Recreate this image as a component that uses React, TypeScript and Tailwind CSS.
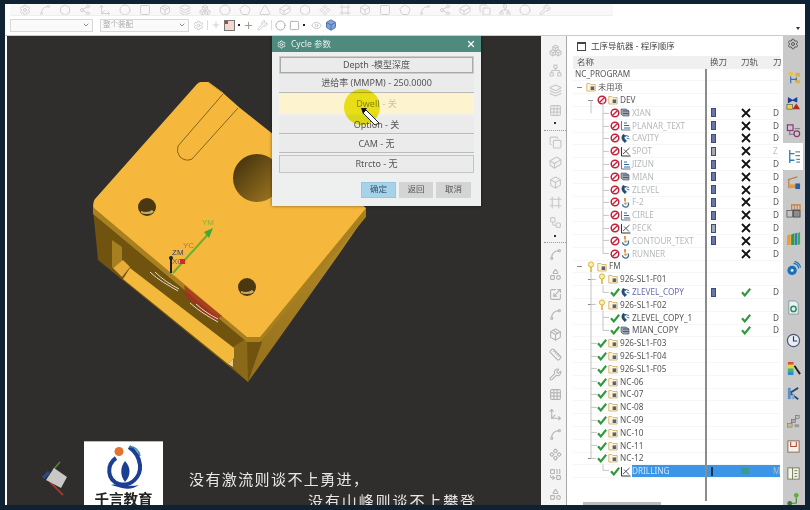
import React from "react";
import {
  Settings, Boxes, Network, Layers, Grid3x3, Box, Cuboid, Copy, Workflow, Spline, Share2, Move3d, Scaling,
  Ruler, Circle, Square, Hexagon, Pentagon, Triangle, Shapes, Component, Package, Combine, Frame, Wrench, ChevronDown,
  X, Eye, Plus,
} from "lucide-react";

const font = "font-['Noto_Sans','Noto_Sans_CJK_SC',sans-serif]";

const NoEntry = () => (
  <svg viewBox="0 0 10 10" className="h-[10px] w-[10px]">
    <circle cx="5" cy="5" r="3.8" fill="#fff" stroke="#c5203a" strokeWidth="1.5" />
    <path d="M2.4 7.6 7.6 2.4" stroke="#c5203a" strokeWidth="1.4" />
  </svg>
);

const Check = () => (
  <svg viewBox="0 0 10 10" className="h-[10px] w-[10px]">
    <path d="M1 5.2 3.8 8.4 9.2 1.8" fill="none" stroke="#2f9a3c" strokeWidth="2.2" />
  </svg>
);

const Bulb = () => (
  <svg viewBox="0 0 10 12" className="h-[12px] w-[10px]">
    <circle cx="5" cy="3.5" r="2.6" fill="#fbeeb0" stroke="#d9b433" strokeWidth="1" />
    <path d="M5 6v5" stroke="#d9b433" strokeWidth="1.6" />
  </svg>
);

const Folder = () => (
  <svg viewBox="0 0 10 10" className="h-[10px] w-[10px]">
    <path d="M.8 1.5h3l1 1h4.4v6.5H.8z" fill="#fdf4dc" stroke="#d0a860" strokeWidth=".8" />
    <rect x="4.6" y="4.4" width="3.6" height="3.6" fill="#5a6470" />
  </svg>
);

const Minus = () => <span className="h-px w-[5px] bg-[#888]" />;

type Op = "mill" | "planar" | "zlevel" | "drill" | "flow";

const OpIcon = ({ kind }: { kind: Op }) => (
  <svg viewBox="0 0 11 11" className="h-[11px] w-[11px]">
    {kind === "mill" && (
      <>
        <path d="M1 2h5l3 2v5H3L1 7z" fill="#9aa2ad" stroke="#555d69" strokeWidth=".7" />
        <path d="M3 4h6M3 6.500h6" stroke="#3f5f86" strokeWidth="1" />
      </>
    )}
    {kind === "planar" && (
      <>
        <path d="M1.500 1v9h9" fill="none" stroke="#6b7480" strokeWidth="1" />
        <path d="M4 3h3M4 5.500h5M4 8h6" stroke="#2c6aa0" strokeWidth="1" />
      </>
    )}
    {kind === "zlevel" && (
      <path d="M3 1.500c-2 3-1 6 2 8l1.500-1.800-2-1.700c-.5-1-.5-1.500 0-2.500l1.500-.5z M6 2.500l3 1M6.500 5l3 1" fill="#1f4d6e" stroke="#1f4d6e" strokeWidth=".8" />
    )}
    {kind === "drill" && (
      <>
        <path d="M1.500 1v9h9" fill="none" stroke="#333" strokeWidth="1" />
        <path d="M3 8 9.500 2M4 3.500l5 5" stroke="#4a5563" strokeWidth="1" />
      </>
    )}
    {kind === "flow" && (
      <>
        <path d="M5 1v3.500" stroke="#c8752c" strokeWidth="1.500" />
        <path d="M8 5.500a3 3 0 1 1-5.500 1.700" fill="none" stroke="#3f6f9e" strokeWidth="1.300" />
        <circle cx="5.500" cy="6.500" r="1.300" fill="#d99a4a" />
      </>
    )}
  </svg>
);

const ToolBar = ({ hatched }: { hatched?: boolean }) => (
  <span className={`block h-[9px] w-[5px] border border-[#3e4a7a] ${hatched ? "bg-[#a4a8b4]" : "bg-[#6a76a8]"}`} />
);

const Cross = () => (
  <svg viewBox="0 0 10 10" className="h-[10px] w-[10px]">
    <path d="M1 1l8 8M9 1 1 9" stroke="#111" strokeWidth="1.800" />
  </svg>
);

const ops: [string, Op, boolean?][] = [
  ["XIAN", "mill"],
  ["PLANAR_TEXT", "planar"],
  ["CAVITY", "zlevel"],
  ["SPOT", "drill", true],
  ["JIZUN", "planar"],
  ["MIAN", "mill"],
  ["ZLEVEL", "zlevel"],
  ["F-2", "flow"],
  ["CIRLE", "planar"],
  ["PECK", "drill", true],
  ["CONTOUR_TEXT", "flow"],
  ["RUNNER", "flow"],
];

const Slot = ({ children }: { children?: React.ReactNode }) => (
  <span className="flex h-full w-[11px] shrink-0 items-center justify-center">{children}</span>
);

const Row = ({
  name,
  pad = "",
  textClass = "text-[#555]",
  tool,
  path,
  last,
  selected,
}: {
  name: React.ReactNode;
  pad?: string;
  textClass?: string;
  tool?: React.ReactNode;
  path?: React.ReactNode;
  last?: string;
  selected?: boolean;
}) => (
  <div className="grid h-[12.800px] grid-cols-[133px_31px_31px_12px] border-b border-[#f6f6f6] text-[8.200px] leading-none">
    <div className={`flex h-full items-center whitespace-nowrap ${pad} ${textClass}`}>{name}</div>
    <div className={`flex items-center pl-[5px] ${selected ? "bg-[#3b96e8]" : ""}`}>{tool}</div>
    <div className={`flex items-center pl-[4px] ${selected ? "bg-[#3b96e8]" : ""}`}>{path}</div>
    <div className={`flex items-center pl-[5px] ${selected ? "bg-[#3b96e8]" : ""} ${last === "D" ? "text-[#555]" : "text-[#bbb]"}`}>{last}</div>
  </div>
);

const FolderRow = ({ label, pad, lead, status }: { label: string; pad: string; lead?: boolean; status: React.ReactNode }) => (
  <Row
    pad={pad}
    name={
      <>
        <Slot>{lead && <Minus />}</Slot>
        {status && <Slot>{status}</Slot>}
        <Slot>
          <Folder />
        </Slot>
        <span className="ml-[2px]">{label}</span>
      </>
    }
  />
);

const OpRow = ({ label, kind, status, textClass, tool, path, last, selected }: {
  label: string;
  kind: Op;
  status: React.ReactNode;
  textClass: string;
  tool?: React.ReactNode;
  path: React.ReactNode;
  last: string;
  selected?: boolean;
}) => (
  <Row
    pad="pl-[36px]"
    textClass={textClass}
    tool={tool}
    path={path}
    last={last}
    selected={selected}
    name={
      <>
        <Slot>{status}</Slot>
        <Slot>
          <OpIcon kind={kind} />
        </Slot>
        <span className={`ml-px flex h-full flex-1 items-center ${selected ? "bg-[#3b96e8]" : ""}`}>{label}</span>
      </>
    }
  />
);

const TreeLines = () => (
  <svg viewBox="573 68.600 133 436" className="absolute top-0 left-0 h-[436px] w-[133px]" fill="none" stroke="#c4c4c4" strokeWidth="1">
    <path d="M591 100V113" />
    <path d="M603 100V253M603 113h6M603 126h6M603 138h6M603 151h6M603 164h6M603 177h6M603 190h6M603 202h6M603 215h6M603 228h6M603 240h6M603 253h6" />
    <path d="M591 272V458M591 279h5M591 304h5M591 343h6M591 356h6M591 368h6M591 381h6M591 394h6M591 407h6M591 420h6M591 432h6M591 445h6M591 458h5" />
    <path d="M603 285V292h6M603 310V330h6M603 317h6M603 464V470h6" />
  </svg>
);

const Navigator = () => (
  <div className={`flex w-[216px] flex-col bg-white pr-[3px] pl-[6px] ${font}`}>
    <div className="flex h-[20px] shrink-0 items-center gap-[5px] pl-[4px] text-[8.500px] text-[#444]">
      <span className="h-[9px] w-[9px] border border-t-2 border-[#444]" />
      工序导航器 - 程序顺序
    </div>
    <div className="grid h-[12.600px] shrink-0 grid-cols-[133px_31px_31px_12px] items-center bg-[#f0f0f0] text-[8.500px] text-[#555]">
      <span className="pl-[4px]">名称</span>
      <span className="pl-[4px]">换刀</span>
      <span className="pl-[4px]">刀轨</span>
      <span className="pl-[5px]">刀</span>
    </div>
    <div className="relative flex-1 overflow-hidden">
      <Row pad="pl-[2px]" name="NC_PROGRAM" />
      <Row
        pad="pl-[1px]"
        name={
          <>
            <Slot>
              <Minus />
            </Slot>
            <Slot>
              <Folder />
            </Slot>
            <span className="ml-[2px]">未用项</span>
          </>
        }
      />
      <FolderRow label="DEV" pad="pl-[12px]" lead status={<NoEntry />} />
      {ops.map(([label, kind, hatched], i) => (
        <OpRow
          key={label}
          label={label}
          kind={kind}
          status={<NoEntry />}
          textClass="text-[#b5b8bb]"
          tool={i < 11 ? <ToolBar hatched={hatched} /> : undefined}
          path={<Cross />}
          last={label === "SPOT" ? "Z" : "D"}
        />
      ))}
      <FolderRow label="FM" pad="pl-[1px]" lead status={<Bulb />} />
      <FolderRow label="926-SL1-F01" pad="pl-[12px]" lead status={<Bulb />} />
      <OpRow label="ZLEVEL_COPY" kind="zlevel" status={<Check />} textClass="text-[#6a6aa8]" tool={<ToolBar />} path={<Check />} last="D" />
      <FolderRow label="926-SL1-F02" pad="pl-[12px]" lead status={<Bulb />} />
      <OpRow label="ZLEVEL_COPY_1" kind="zlevel" status={<Check />} textClass="text-[#555]" path={<Check />} last="D" />
      <OpRow label="MIAN_COPY" kind="mill" status={<Check />} textClass="text-[#555]" path={<Check />} last="D" />
      {["926-SL1-F03", "926-SL1-F04", "926-SL1-F05", "NC-06", "NC-07", "NC-08", "NC-09", "NC-10", "NC-11"].map((n) => (
        <FolderRow key={n} label={n} pad="pl-[12px]" status={<Check />} />
      ))}
      <FolderRow label="NC-12" pad="pl-[12px]" lead status={<Check />} />
      <OpRow
        label="DRILLING"
        kind="drill"
        status={<Check />}
        textClass="text-[#cfe6fb]"
        tool={<span className="h-[9px] w-[2px] bg-[#234]" />}
        path={<span className="h-[6px] w-[8px] bg-[#3a9a90]" />}
        last="M"
        selected
      />
      <TreeLines />
      <span className="absolute top-0 bottom-[4px] left-[132px] w-[2px] bg-[#8c8c8c]" />
      <span className="absolute bottom-0 left-[10px] h-[3px] w-[78px] bg-[#bdbdbd]" />
    </div>
  </div>
);

// side tab icons, small hand drawn glyphs
const tabIcons: React.ReactNode[] = [
  <>
    <circle cx="5" cy="4" r="2.500" fill="#e8c33c" />
    <path d="M5 7v7M5 10h6M11 8v4" stroke="#3f6fa8" strokeWidth="1.300" />
    <rect x="10" y="3" width="5" height="4" fill="#e0b040" />
    <rect x="10" y="11" width="5" height="3" fill="#e0b040" />
  </>,
  <>
    <path d="M2 1l5 3 5-3v6L7 5 2 8z" fill="#1c3fa0" />
    <rect x="1" y="9" width="6" height="5" fill="#efd23c" stroke="#444" strokeWidth=".6" />
    <path d="M7 14l4-6 4 6z" fill="#b02a22" />
  </>,
  <>
    <rect x="1.500" y="2" width="6" height="6" fill="none" stroke="#8a3a7a" strokeWidth="1.300" />
    <path d="M4 8v5M4 12h5" stroke="#7c6a8c" strokeWidth="1" />
    <circle cx="11.500" cy="11.500" r="3" fill="none" stroke="#8a3a6a" strokeWidth="1.300" />
    <path d="M9 6h6" stroke="#777" strokeWidth="1" />
  </>,
  <>
    <path d="M4 1v14M4 5h5M4 12h5" stroke="#2f7cb4" strokeWidth="1.400" />
    <path d="M10 3h5M10 7h5M11 11h4M11 14h4" stroke="#6a8a9a" strokeWidth="1.200" />
  </>,
  <>
    <path d="M2 5 12 2M3 4v10" stroke="#b87a4a" strokeWidth="1.200" />
    <path d="M3 10h8v4H3z" fill="#e89a38" />
    <path d="M10 9h5v6h-5z" fill="#2a5fa8" />
  </>,
  <>
    <path d="M6 2h9v5H6z" fill="none" stroke="#d07a30" strokeWidth="1.200" />
    <path d="M9 2v5M12 2v5" stroke="#d07a30" strokeWidth="1" />
    <rect x="1" y="8" width="6" height="7" fill="#c4c4c4" stroke="#555" strokeWidth=".8" />
    <rect x="8" y="8" width="7" height="7" fill="#8c8c8c" stroke="#444" strokeWidth=".8" />
  </>,
  <>
    <path d="M1 5 5 3v12H1z" fill="#e8a030" />
    <path d="M5.500 4 9 2v13H5.500z" fill="#2e9a4a" />
    <path d="M9.500 3 12 1.500V15H9.500z" fill="#2f7cc4" />
    <path d="M12.500 2.500 15 1v13l-2.500 1z" fill="#45a850" />
  </>,
  <>
    <circle cx="6.500" cy="10" r="5" fill="#1c70b8" />
    <circle cx="6.500" cy="10" r="1.500" fill="#dff" />
    <path d="M8 2.500a6 6 0 0 1 5.500 5.500M9 .5A8.500 8.500 0 0 1 15.500 7" fill="none" stroke="#1c70b8" strokeWidth="1.300" />
  </>,
  <>
    <path d="M3 1h7l3 3v11H3z" fill="#e8f2f2" stroke="#7a8a9a" strokeWidth=".8" />
    <circle cx="8" cy="9.500" r="2.800" fill="none" stroke="#2f8a60" strokeWidth="1.600" />
  </>,
  <>
    <circle cx="8" cy="8" r="6.500" fill="#e8ecf4" stroke="#4a5a78" strokeWidth="1.300" />
    <path d="M8 3.500V8.500H12" fill="none" stroke="#263854" strokeWidth="1.200" />
  </>,
  <>
    <path d="M2 1h6v3H2z" fill="#d85030" />
    <path d="M2 4h6v4H2z" fill="#e8d438" />
    <path d="M2 8h6v3H2z" fill="#38b860" />
    <path d="M2 11h6v4H2z" fill="#2f8ad0" />
    <path d="M9 5l6 9" stroke="#222" strokeWidth="2" />
  </>,
  <>
    <path d="M2 2h3v12H2z" fill="#5a90c8" />
    <path d="M5 7 13 2M5 8l8 6" stroke="#2a4a70" strokeWidth="2" />
    <path d="M6 9h3v5H6z" fill="#88a8cc" />
  </>,
  <>
    <path d="M4 11 8 7l4-4" stroke="#777" strokeWidth="1" />
    <rect x="1.500" y="10" width="5" height="4" fill="#cdb68a" stroke="#777" strokeWidth=".6" />
    <rect x="6" y="6" width="4" height="3" fill="#aaa" stroke="#666" strokeWidth=".6" />
    <rect x="10" y="1.500" width="4" height="3" fill="#c0c0c0" stroke="#666" strokeWidth=".6" />
    <rect x="9" y="11" width="5" height="3" fill="#999" />
  </>,
  <>
    <rect x="2" y="2" width="12" height="12" fill="#f6efe8" stroke="#8a6a5a" strokeWidth="1" />
    <path d="M5 3v5h6V3" fill="none" stroke="#b0503a" strokeWidth="1.200" />
  </>,
  <>
    <rect x="2" y="2" width="12" height="12" fill="#f4f4ea" stroke="#7a7a60" strokeWidth="1" />
    <path d="M7 2v12M9 5h3M9 8h3M9 11h3" stroke="#6a7a50" strokeWidth="1" />
  </>,
  <>
    <circle cx="11" cy="3.500" r="2.500" fill="#5ab040" />
    <path d="M11 6v6M4 12h7" stroke="#4a8a30" strokeWidth="1.300" />
    <circle cx="4" cy="12" r="2.500" fill="#3a7a40" />
  </>,
];

const TabIcon = ({ index, className = "" }: { index: number; className?: string }) => (
  <svg viewBox="0 0 16 16" className={`h-[15px] w-[15px] shrink-0 ${className}`}>
    {tabIcons[index]}
  </svg>
);

const Rail = () => (
  <div className="flex w-[22px] flex-col items-center overflow-hidden bg-[#c9c9c9] pt-[2px] pr-[2px]">
    <Settings className="mb-[19.500px] h-[12px] w-[12px] shrink-0 text-[#555]" />
    <TabIcon index={0} />
    <TabIcon index={1} className="mt-[11.500px]" />
    <TabIcon index={2} className="mt-[11.500px]" />
    <div className="mt-[5.500px] flex h-[27px] w-full shrink-0 items-center justify-center bg-white">
      <TabIcon index={3} />
    </div>
    <TabIcon index={4} className="mt-[4.500px]" />
    <TabIcon index={5} className="mt-[13px]" />
    <TabIcon index={6} className="mt-[13px]" />
    <TabIcon index={7} className="mt-[15px]" />
    <TabIcon index={8} className="mt-[24px]" />
    <TabIcon index={9} className="mt-[18px]" />
    <TabIcon index={10} className="mt-[13px]" />
    <TabIcon index={11} className="mt-[10px]" />
    <TabIcon index={12} className="mt-[13px]" />
    <TabIcon index={13} className="mt-[10px]" />
    <TabIcon index={14} className="mt-[12px]" />
    <TabIcon index={15} className="mt-[11px]" />
  </div>
);

const toolIcon = "h-[13px] w-[13px] shrink-0 text-[#c6c6c6]";
const toolGroup = "flex flex-col gap-[7px]";
const groupA = [Boxes, Network, Layers, Grid3x3];
const groupB = [Copy, Cuboid, Box, Frame, Workflow];
const groupC = [Spline, Shapes, Scaling, Spline, Package, Ruler, Wrench, Grid3x3, Move3d, Spline, Component, Combine, Shapes];

const LeftTools = () => (
  <div className="flex w-[23px] flex-col items-center overflow-hidden border-r border-[#a8a8a8] bg-[#f4f4f4] pt-[7.500px]">
    <div className={toolGroup}>
      {groupA.map((Icon, i) => (
        <Icon key={i} className={toolIcon} />
      ))}
    </div>
    <span className="my-[5.500px] h-[2px] w-[2px] shrink-0 bg-[#333]" />
    <span className="mb-[5.500px] w-full shrink-0 border-t border-dotted border-[#999]" />
    <div className={toolGroup}>
      {groupB.map((Icon, i) => (
        <Icon key={i} className={toolIcon} />
      ))}
    </div>
    <span className="my-[5.500px] h-[2px] w-[2px] shrink-0 bg-[#333]" />
    <span className="mb-[4.500px] w-full shrink-0 border-t border-dotted border-[#999]" />
    <div className={toolGroup}>
      {groupC.map((Icon, i) => (
        <Icon key={i} className="h-[13px] w-[13px] shrink-0 text-[#b4b4b4]" />
      ))}
    </div>
  </div>
);

const topIcons = [Settings, Spline, Hexagon, Share2, Move3d, Circle, Square, Package, Layers, Boxes, Circle, Pentagon, Triangle, Cuboid, Hexagon, Component, Frame, Box, Square, Pentagon, Spline, Share2, Cuboid, Copy, Network, Circle, Wrench];

const Combo = ({ width, label }: { width: string; label?: string }) => (
  <div className={`flex h-[13px] items-center justify-between border border-[#d8d8d8] bg-[#fafafa] px-[2px] text-[7.500px] text-[#aaa] ${width}`}>
    <span>{label}</span>
    <ChevronDown className="h-[8px] w-[8px] text-[#555]" />
  </div>
);

const Toolbar = () => (
  <div className={`relative h-[32px] shrink-0 border-b border-[#dcc9ad] bg-white pl-[5px] ${font}`}>
    <div className="flex h-[12px] w-[603px] items-center gap-[8px] overflow-hidden border-b border-[#eee] bg-[#f8f8f8] pl-[9px]">
      {topIcons.map((Icon, i) => (
        <Icon key={i} className="h-[12px] w-[12px] shrink-0 text-[#d2d2d2]" />
      ))}
    </div>
    <div className="flex h-[18px] items-center">
      <Combo width="w-[83px]" />
      <span className="w-[7px]" />
      <Combo width="w-[89px]" label="整个装配" />
      <div className="ml-[4px] flex items-center gap-[3px]">
        <Settings className="h-[11px] w-[11px] text-[#c8c8c8]" />
        <span className="h-[10px] w-px bg-[#ddd]" />
        <Plus className="h-[10px] w-[10px] text-[#c8c8c8]" />
        <span className="h-[11px] w-[11px] border border-[#777] bg-[#f1d8cc]">
          <span className="block h-[3px] w-[3px] bg-[#c83c28]" />
        </span>
        <span className="h-[2px] w-[2px] bg-[#222]" />
        <Plus className="h-[11px] w-[11px] text-[#8da088]" />
        <Wrench className="h-[11px] w-[11px] text-[#c8c8c8]" />
        <span className="h-[10px] w-px bg-[#ddd]" />
        <Circle className="h-[11px] w-[11px] text-[#aaa]" />
        <Square className="h-[11px] w-[11px] text-[#aaa]" />
        <span className="h-[2px] w-[2px] bg-[#222]" />
        <Eye className="ml-[3px] h-[11px] w-[11px] text-[#c8c8c8]" />
        <Box className="h-[12px] w-[12px] fill-[#7fa4d8] text-[#4f74b0]" />
      </div>
    </div>
    <span className="absolute right-[5px] bottom-[5px] h-0 w-0 border-x-[2px] border-t-[3px] border-x-transparent border-t-[#333]" />
  </div>
);

const Part = () => (
  <svg viewBox="7 36 534 469" className="absolute inset-0 h-full w-full">
    <defs>
      <linearGradient id="hole" x1="0" x2="1" y1="0" y2="1">
        <stop offset="0" stopColor="#3b2c0c" />
        <stop offset="1" stopColor="#a67c22" />
      </linearGradient>
      <linearGradient id="side" x1="1" x2="0" y1="0" y2="1">
        <stop offset="0" stopColor="#b58c2a" />
        <stop offset="1" stopColor="#94701c" />
      </linearGradient>
    </defs>
    <path d="M260 338 366 215 337 257 248 382 246 345z" fill="url(#side)" />
    <path d="M93 209 98 260 248 382 262 342z" fill="#6f530f" />
    <path d="M233 347 247 338 248 382 233 368z" fill="#8a6918" />
    <path d="M112 240 122 247V262L112 268z" fill="#a68020" />
    <path d="M113 268 123 260 130 267 122 277z" fill="#e6ae38" />
    <path d="M130 268 234 348V358L228 364 123 279z" fill="#f2b93c" />
    <path d="M228 364 233 359V367z" fill="#e8cf8c" />
    <path d="M93 205V214L247 342H260L366 217V208z" fill="#a88020" />
    <path d="M208 82H201Q199 82 197 84L95 199Q92 203 94 208L247 337H260L366 208 240 108 223 93z" fill="#f5b83c" />
    <path d="M223 94 178 146Q176 152 180 157 186 162 192 159L238 108" fill="#f5b83c" stroke="#85641a" strokeWidth="1" />
    <path d="M208 82 223 93" stroke="#d09c30" strokeWidth="1" />
    <circle cx="257" cy="178" r="24" fill="url(#hole)" />
    <circle cx="147" cy="207" r="9" fill="#4a3810" />
    <path d="M141 213a9 5 0 0 0 13-1l-2-2a8 4 0 0 1-11 1z" fill="#c7ab6a" />
    <circle cx="247" cy="287" r="9" fill="#4a3810" />
    <path d="M241 293a9 5 0 0 0 13-1l-2-2a8 4 0 0 1-11 1z" fill="#c7ab6a" />
    <path d="M184 285 222 316 214 321 186 297z" fill="#a82c20" opacity=".75" />
    <path d="M150 272c8 8 18 13 28 19M155 272c7 7 16 13 24 17M190 303c9 8 19 14 28 19M196 304c8 7 14 11 22 15" fill="none" stroke="#e8dcc0" strokeWidth="1" />
    <path d="M173 273 211 231" stroke="#6cae2e" strokeWidth="2" />
    <path d="M213 228 204 232 209 238z" fill="#46a834" />
    <rect x="180" y="259" width="5" height="5" fill="#d8281f" />
    <path d="M171 258V273" stroke="#16213a" strokeWidth="2" />
    <circle cx="171" cy="258" r="2" fill="#16213a" />
    <g className="font-['Liberation_Sans',sans-serif]" fontSize="8">
      <text x="172" y="255" fill="#3a4060">ZM</text>
      <text x="172" y="264" fill="#7a4a80">XC</text>
      <text x="183" y="248" fill="#c07040">YC</text>
      <text x="202" y="225" fill="#8fb030">YM</text>
    </g>
    <path d="M50 482 63 495" stroke="#a83232" strokeWidth="2" />
    <path d="M60 462 53 470" stroke="#4c8a3a" strokeWidth="1.500" />
    <path d="M49 472 43 478" stroke="#2b4a90" strokeWidth="3" />
    <path d="M54 468 67 477 61 488 46 480z" fill="#c8c8c6" />
  </svg>
);

const Logo = () => (
  <div className="absolute top-[405px] left-[77px] flex h-[64px] w-[79px] flex-col items-center overflow-hidden border-t border-[#bbb] bg-white">
    <svg viewBox="0 0 46 44" className="mt-[3px] h-[44px] w-[46px] shrink-0">
      <circle cx="18" cy="6.500" r="4.500" fill="#e2722f" />
      <path d="M15 13C5 20 6 35 18 39 30 42 40 32 39 20 38 12 34 6 28 2" fill="none" stroke="#1b3f91" strokeWidth="4" />
      <path d="M28 2c5-1 10 3 11 9" fill="none" stroke="#3f8ea8" strokeWidth="1.500" />
      <path d="M24 16c6 6 6 15 0 21-5-6-5-15 0-21z" fill="#1b3f91" />
      <path d="M10 40c8-3 15 3 28 0-6 4-10 4-14 3.500S15 41 10 40z" fill="#1b3f91" />
    </svg>
    <span className="mt-[3px] text-[14.500px] leading-none font-bold text-[#222]">千言教育</span>
  </div>
);

const Dialog = () => (
  <div className={`absolute top-0 left-[265px] flex h-[170px] w-[209px] flex-col bg-[#eef0f0] shadow-[0_0_3px_rgba(0,0,0,0.5)] ${font}`}>
    <div className="flex h-[16px] shrink-0 items-center gap-[5px] bg-[#4f8a7e] pr-[5px] pl-[5px] text-[8.500px] text-[#e6efec]">
      <Settings className="h-[9px] w-[9px] text-white" />
      <span className="flex-1">Cycle 参数</span>
      <X className="h-[10px] w-[10px] stroke-[3px] text-white" />
    </div>
    <div className="flex flex-col gap-[1.500px] px-[7px] pt-[5px] text-[9px] text-[#555]">
      <div className="mx-px flex h-[16px] items-center justify-center border border-[#aaa] bg-[#ebebeb] outline outline-[#ccc]">Depth -模型深度</div>
      <div className="flex h-[18px] items-center justify-center border-b border-[#bbb] bg-[#ebebeb]">进给率 (MMPM) - 250.0000</div>
      <div className="flex h-[20px] items-center justify-center bg-[#fdf3cf] text-[#8d9a2a]">
        Dwell<span className="ml-[3px] text-[#c8c8a0]">- 关</span>
      </div>
      <div className="flex h-[18px] items-center justify-center border-b border-[#bbb] bg-[#ebebeb] pt-px">Option - 关</div>
      <div className="flex h-[18px] items-center justify-center border-b border-[#bbb] bg-[#ebebeb]">CAM - 无</div>
      <div className="flex h-[18px] items-center justify-center border border-[#c4c4c4] bg-[#ebebeb]">Rtrcto - 无</div>
    </div>
    <div className="mt-[9px] flex justify-end gap-[3px] pr-[10px] text-[8.500px] text-[#555]">
      <span className="flex h-[16px] w-[35px] items-center justify-center border border-[#9cc6de] bg-[#a6d3ea] text-[#35566a]">确定</span>
      <span className="flex h-[16px] w-[34px] items-center justify-center bg-[#d4d4d4]">返回</span>
      <span className="flex h-[16px] w-[35px] items-center justify-center bg-[#d4d4d4]">取消</span>
    </div>
    <svg viewBox="0 0 40 40" className="absolute top-[51px] left-[70px] h-[40px] w-[40px] mix-blend-multiply">
      <circle cx="20" cy="20" r="18" fill="#ebe81c" />
    </svg>
    <svg viewBox="0 0 40 40" className="absolute top-[51px] left-[70px] h-[40px] w-[40px]">
      <path d="M24 23 37 36 33 38 21 26z" fill="#fff" stroke="#222" strokeWidth="1" />
      <path d="M19 21 25 21 21 27z" fill="#111" />
    </svg>
  </div>
);

export default function App() {
  return (
    <div className="h-[510px] w-[810px] overflow-hidden bg-[#0e2233] pt-[4px] pr-[5px] pb-[5px] pl-[5px] blur-[0.5px]">
      <div className="flex h-full flex-col bg-white">
        <Toolbar />
        <div className="flex min-h-0 flex-1 pl-[2px]">
          <div className={`relative w-[534px] shrink-0 overflow-hidden bg-[#2f2e2d] ${font}`}>
            <Part />
            <Dialog />
            <Logo />
            <p className="absolute top-[436px] left-[182px] text-[15px] leading-none tracking-[1.400px] whitespace-nowrap text-[#e8e8e8]">没有激流则谈不上勇进，</p>
            <p className="absolute top-[458px] left-[301px] text-[15px] leading-none tracking-[1.900px] whitespace-nowrap text-[#e8e8e8]">没有山峰则谈不上攀登</p>
          </div>
          <span className="w-[3px] shrink-0 bg-[#f4f4f4]" />
          <LeftTools />
          <Navigator />
          <Rail />
        </div>
      </div>
    </div>
  );
}
